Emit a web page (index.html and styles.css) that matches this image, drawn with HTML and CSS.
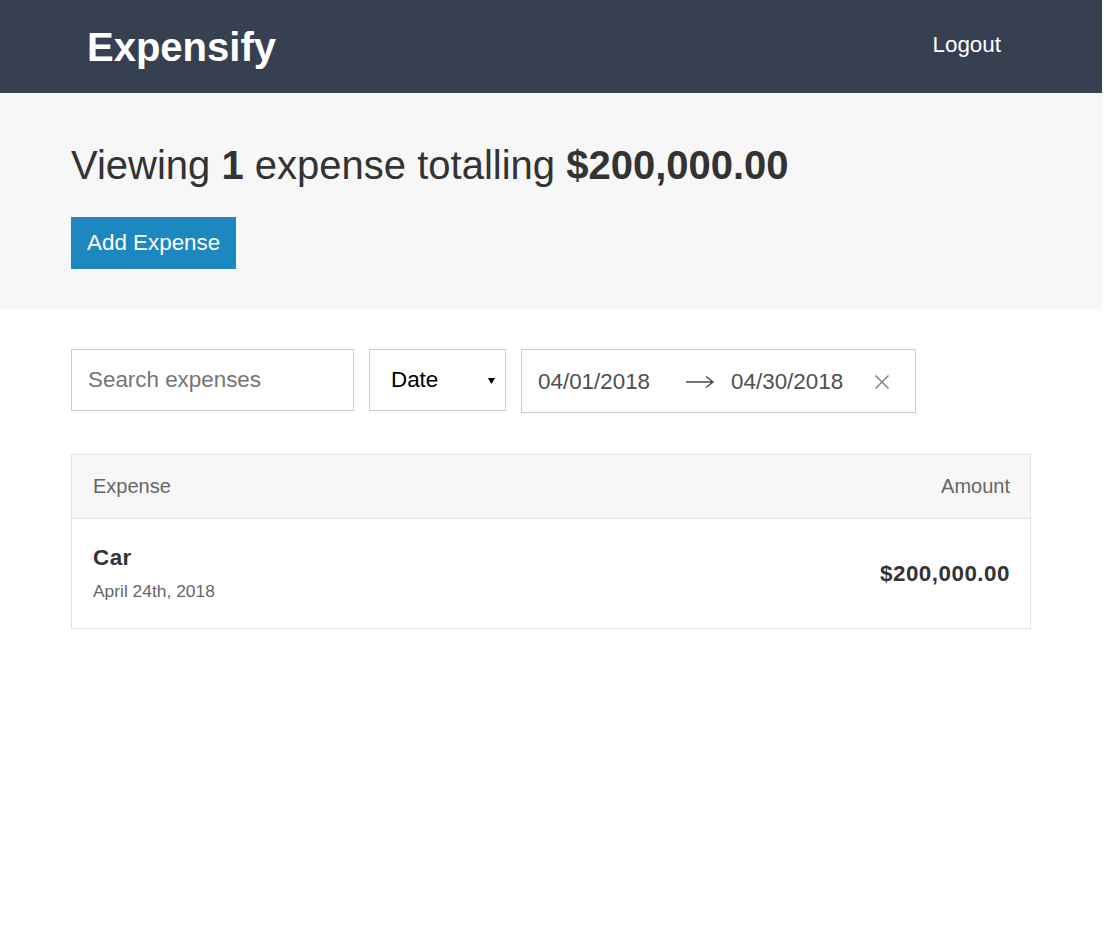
FILE: index.html
```html
<!DOCTYPE html>
<html lang="en">
<head>
<meta charset="utf-8">
<title>Expensify</title>
<link rel="stylesheet" href="styles.css">
</head>
<body>
<div class="page">
  <header class="header">
    <div class="container header__content">
      <h1 class="header__title">Expensify</h1>
      <button class="header__logout">Logout</button>
    </div>
  </header>
  <section class="summary">
    <div class="container">
      <h2 class="summary__title">Viewing <b>1</b> expense totalling <b>$200,000.00</b></h2>
      <button class="btn">Add Expense</button>
    </div>
  </section>
  <main class="container">
    <div class="filters">
      <div class="field field--search"><span class="placeholder">Search expenses</span></div>
      <div class="field field--select"><span>Date</span>
        <svg class="caret" width="7" height="6" viewBox="0 0 7 6"><path d="M0 0H7L3.5 6Z" fill="#000"/></svg>
      </div>
      <div class="daterange">
        <span class="date">04/01/2018</span>
        <svg class="arrow" width="30" height="14" viewBox="0 0 30 14"><path d="M1 7H28M21 1.5L28 7L21 12.5" fill="none" stroke="#484848" stroke-width="1.4"/></svg>
        <span class="date">04/30/2018</span>
        <svg class="clear" width="16" height="16" viewBox="0 0 16 16"><path d="M1.5 1.5L14.5 14.5M14.5 1.5L1.5 14.5" fill="none" stroke="#82888a" stroke-width="1.5"/></svg>
      </div>
    </div>
    <div class="list">
      <div class="list__header">
        <span>Expense</span>
        <span>Amount</span>
      </div>
      <div class="list__item">
        <div>
          <div class="item__title">Car</div>
          <div class="item__date">April 24th, 2018</div>
        </div>
        <div class="item__amount">$200,000.00</div>
      </div>
    </div>
  </main>
</div>
</body>
</html>
```
FILE: styles.css
```css
* { box-sizing: border-box; }
html, body { margin: 0; padding: 0; }
body {
  font-family: "Liberation Sans", Arial, sans-serif;
  color: #333333;
  font-size: 22.4px;
  background: #ffffff;
}
.page { margin-right: 15px; }
.container { width: 960px; margin: 0 auto; }

.header { background: #364051; height: 93px; }
.header__content {
  display: flex;
  align-items: center;
  justify-content: space-between;
  height: 93px;
  padding: 0 16px;
}
.header__title {
  margin: 0;
  color: #fff;
  font-size: 40px;
  font-weight: bold;
  line-height: 1;
}
.header__logout {
  background: none;
  border: none;
  color: #fff;
  font-family: inherit;
  font-size: 22.4px;
  padding: 0;
  margin-right: 14px;
  margin-bottom: 3px;
}

.summary { background: #f7f7f7; padding: 48px 0 40px; }
.summary__title {
  margin: 0 0 28px;
  font-size: 40px;
  font-weight: normal;
  line-height: 48px;
  color: #333;
}
.summary__title b { font-weight: bold; }
.btn {
  background: #1c88bf;
  color: #fff;
  border: none;
  font-family: inherit;
  font-size: 22.4px;
  line-height: 26px;
  padding: 13px 16px;
  height: 52px;
  display: block;
}

.filters {
  display: flex;
  align-items: flex-start;
  gap: 15px;
  margin-top: 40px;
}
.field {
  height: 62px;
  border: 1px solid #cacccd;
  display: flex;
  align-items: center;
  padding: 0 16px;
  font-size: 22.4px;
}
.field--search { width: 283px; }
.placeholder { color: #757575; }
.field--select {
  width: 137px;
  padding: 0 10px 0 21px;
  justify-content: space-between;
  color: #000;
}
.caret { margin-top: 2px; }
.daterange {
  width: 395px;
  height: 64px;
  border: 1px solid #cacccd;
  display: flex;
  align-items: center;
  padding: 0 25px 0 16px;
  color: #4f4f4f;
}
.date { font-size: 22.4px; padding-top: 1px; }
.arrow { margin: 2px 16px 0 35px; }
.clear { margin-left: auto; margin-top: 2px; }

.list {
  margin-top: 41px;
  border: 1px solid #e5e5e5;
}
.list__header {
  display: flex;
  justify-content: space-between;
  align-items: center;
  background: #f7f7f7;
  height: 64px;
  padding: 0 20px 0 21px;
  border-bottom: 1px solid #e5e5e5;
  color: #666;
  font-size: 20px;
}
.list__item {
  display: flex;
  justify-content: space-between;
  align-items: center;
  height: 109px;
  padding: 0 20px 0 21px;
}
.item__title {
  font-size: 22.4px;
  font-weight: bold;
  letter-spacing: 0.5px;
  line-height: 26px;
  margin-bottom: 10px;
  margin-top: -2px;
}
.item__date {
  font-size: 17.4px;
  color: #666;
  line-height: 20px;
}
.item__amount {
  font-size: 22.4px;
  font-weight: bold;
  letter-spacing: 0.5px;
}
```
